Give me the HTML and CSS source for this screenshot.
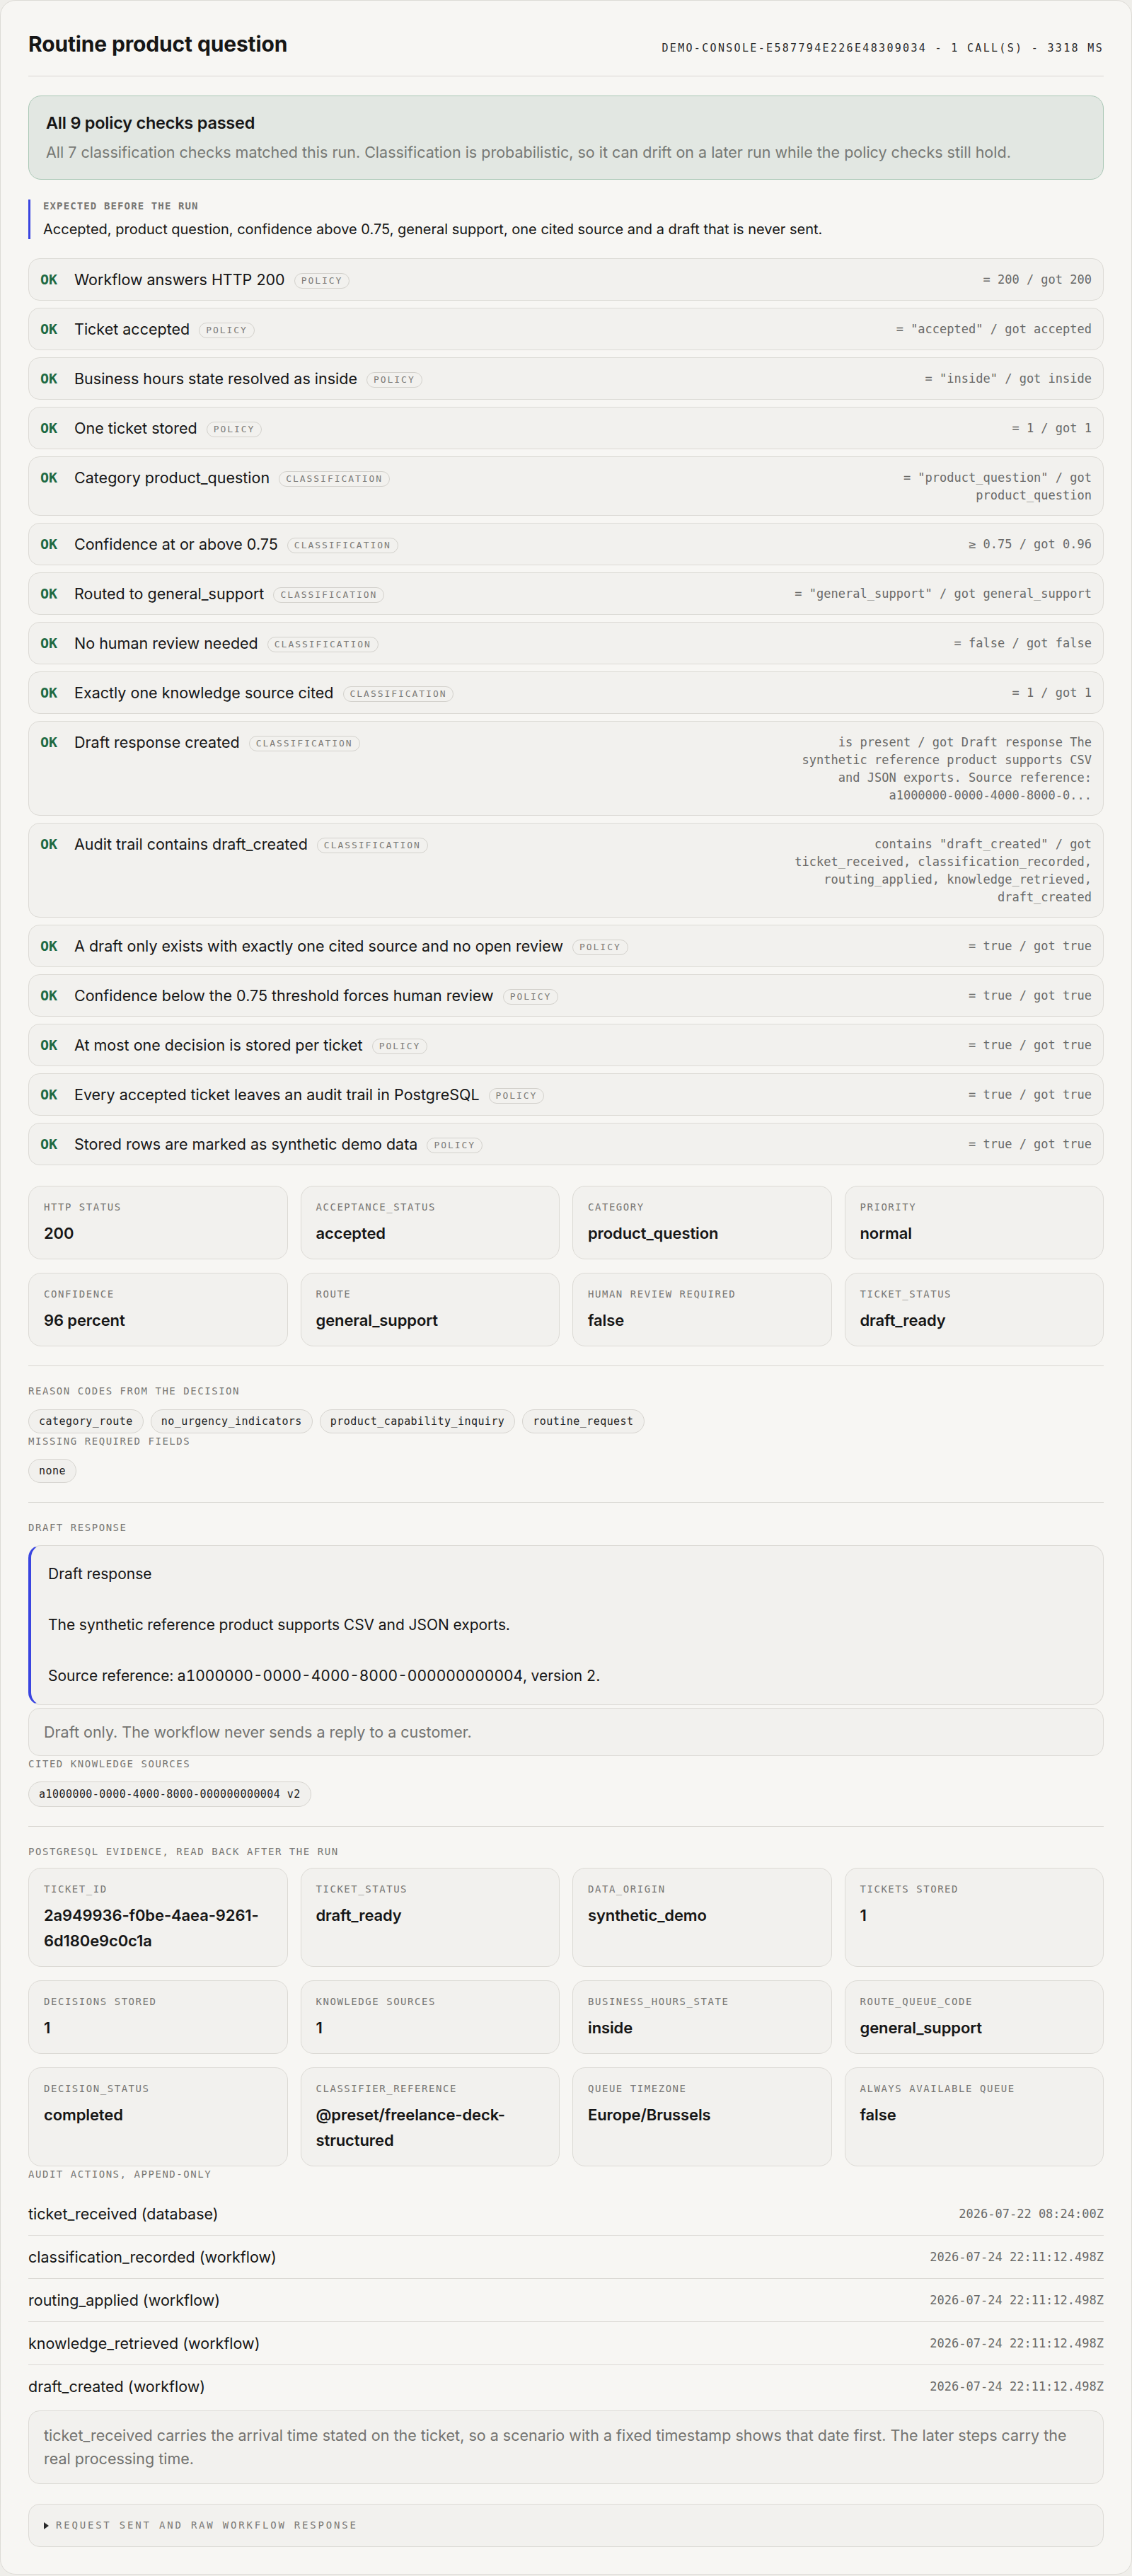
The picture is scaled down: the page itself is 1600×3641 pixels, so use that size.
FILE: index.html
```html
<!DOCTYPE html>
<html lang="en">
<head>
  <meta charset="UTF-8" />
  <meta name="viewport" content="width=device-width, initial-scale=1.0" />
  <title>Routine product question</title>
  <link rel="stylesheet" href="styles.css">
</head>
<body>
  <main class="run">
    <header class="run-head">
      <h1>Routine product question</h1>
      <span class="run-meta">demo-console-e587794e226e48309034 - 1 call(s) - 3318 ms</span>
    </header>

    <section class="verdict">
      <h2>All 9 policy checks passed</h2>
      <p>All 7 classification checks matched this run. Classification is probabilistic, so it can drift on a later run while the policy checks still hold.</p>
    </section>

    <section class="expected">
      <div class="caption strong">Expected before the run</div>
      <p>Accepted, product question, confidence above 0.75, general support, one cited source and a draft that is never sent.</p>
    </section>

    <ul class="checks">
      <li class="check"><span class="ok">OK</span><span class="check-name">Workflow answers HTTP 200 <span class="kind">policy</span></span><span class="check-value">= 200 / got 200</span></li>
      <li class="check"><span class="ok">OK</span><span class="check-name">Ticket accepted <span class="kind">policy</span></span><span class="check-value">= "accepted" / got accepted</span></li>
      <li class="check"><span class="ok">OK</span><span class="check-name">Business hours state resolved as inside <span class="kind">policy</span></span><span class="check-value">= "inside" / got inside</span></li>
      <li class="check"><span class="ok">OK</span><span class="check-name">One ticket stored <span class="kind">policy</span></span><span class="check-value">= 1 / got 1</span></li>
      <li class="check"><span class="ok">OK</span><span class="check-name">Category product_question <span class="kind">classification</span></span><span class="check-value">= "product_question" / got product_question</span></li>
      <li class="check"><span class="ok">OK</span><span class="check-name">Confidence at or above 0.75 <span class="kind">classification</span></span><span class="check-value">&ge; 0.75 / got 0.96</span></li>
      <li class="check"><span class="ok">OK</span><span class="check-name">Routed to general_support <span class="kind">classification</span></span><span class="check-value">= "general_support" / got general_support</span></li>
      <li class="check"><span class="ok">OK</span><span class="check-name">No human review needed <span class="kind">classification</span></span><span class="check-value">= false / got false</span></li>
      <li class="check"><span class="ok">OK</span><span class="check-name">Exactly one knowledge source cited <span class="kind">classification</span></span><span class="check-value">= 1 / got 1</span></li>
      <li class="check"><span class="ok">OK</span><span class="check-name">Draft response created <span class="kind">classification</span></span><span class="check-value">is present / got Draft response The synthetic reference product supports CSV and JSON exports. Source reference: a1000000-0000-4000-8000-0...</span></li>
      <li class="check"><span class="ok">OK</span><span class="check-name">Audit trail contains draft_created <span class="kind">classification</span></span><span class="check-value">contains "draft_created" / got ticket_received, classification_recorded, routing_applied, knowledge_retrieved, draft_created</span></li>
      <li class="check"><span class="ok">OK</span><span class="check-name">A draft only exists with exactly one cited source and no open review <span class="kind">policy</span></span><span class="check-value">= true / got true</span></li>
      <li class="check"><span class="ok">OK</span><span class="check-name">Confidence below the 0.75 threshold forces human review <span class="kind">policy</span></span><span class="check-value">= true / got true</span></li>
      <li class="check"><span class="ok">OK</span><span class="check-name">At most one decision is stored per ticket <span class="kind">policy</span></span><span class="check-value">= true / got true</span></li>
      <li class="check"><span class="ok">OK</span><span class="check-name">Every accepted ticket leaves an audit trail in PostgreSQL <span class="kind">policy</span></span><span class="check-value">= true / got true</span></li>
      <li class="check"><span class="ok">OK</span><span class="check-name">Stored rows are marked as synthetic demo data <span class="kind">policy</span></span><span class="check-value">= true / got true</span></li>
    </ul>

    <div class="facts decision">
      <div class="fact"><div class="caption">HTTP status</div><div class="fact-value">200</div></div>
      <div class="fact"><div class="caption">acceptance_status</div><div class="fact-value">accepted</div></div>
      <div class="fact"><div class="caption">category</div><div class="fact-value">product_question</div></div>
      <div class="fact"><div class="caption">priority</div><div class="fact-value">normal</div></div>
      <div class="fact"><div class="caption">confidence</div><div class="fact-value">96 percent</div></div>
      <div class="fact"><div class="caption">route</div><div class="fact-value">general_support</div></div>
      <div class="fact"><div class="caption">human review required</div><div class="fact-value">false</div></div>
      <div class="fact"><div class="caption">ticket_status</div><div class="fact-value">draft_ready</div></div>
    </div>

    <hr class="rule">

    <section class="codes">
      <div class="caption">Reason codes from the decision</div>
      <div class="chips">
        <span class="chip">category_route</span>
        <span class="chip">no_urgency_indicators</span>
        <span class="chip">product_capability_inquiry</span>
        <span class="chip">routine_request</span>
      </div>
      <div class="caption tight">Missing required fields</div>
      <div class="chips">
        <span class="chip">none</span>
      </div>
    </section>

    <hr class="rule">

    <section class="draft-block">
      <div class="caption">Draft response</div>
      <div class="draft">Draft response

The synthetic reference product supports CSV and JSON exports.

Source reference: a1000000-0000-4000-8000-000000000004, version 2.</div>
      <p class="note">Draft only. The workflow never sends a reply to a customer.</p>
      <div class="caption tight">Cited knowledge sources</div>
      <div class="chips">
        <span class="chip">a1000000-0000-4000-8000-000000000004 v2</span>
      </div>
    </section>

    <hr class="rule">

    <section class="evidence">
      <div class="caption">PostgreSQL evidence, read back after the run</div>
      <div class="facts">
        <div class="fact"><div class="caption">ticket_id</div><div class="fact-value">2a949936-f0be-4aea-9261-6d180e9c0c1a</div></div>
        <div class="fact"><div class="caption">ticket_status</div><div class="fact-value">draft_ready</div></div>
        <div class="fact"><div class="caption">data_origin</div><div class="fact-value">synthetic_demo</div></div>
        <div class="fact"><div class="caption">tickets stored</div><div class="fact-value">1</div></div>
        <div class="fact"><div class="caption">decisions stored</div><div class="fact-value">1</div></div>
        <div class="fact"><div class="caption">knowledge sources</div><div class="fact-value">1</div></div>
        <div class="fact"><div class="caption">business_hours_state</div><div class="fact-value">inside</div></div>
        <div class="fact"><div class="caption">route_queue_code</div><div class="fact-value">general_support</div></div>
        <div class="fact"><div class="caption">decision_status</div><div class="fact-value">completed</div></div>
        <div class="fact"><div class="caption">classifier_reference</div><div class="fact-value">@preset/freelance-deck-structured</div></div>
        <div class="fact"><div class="caption">queue timezone</div><div class="fact-value">Europe/Brussels</div></div>
        <div class="fact"><div class="caption">always available queue</div><div class="fact-value">false</div></div>
      </div>

      <div class="caption tight">Audit actions, append-only</div>
      <ul class="audit">
        <li><span>ticket_received (database)</span><time>2026-07-22 08:24:00Z</time></li>
        <li><span>classification_recorded (workflow)</span><time>2026-07-24 22:11:12.498Z</time></li>
        <li><span>routing_applied (workflow)</span><time>2026-07-24 22:11:12.498Z</time></li>
        <li><span>knowledge_retrieved (workflow)</span><time>2026-07-24 22:11:12.498Z</time></li>
        <li><span>draft_created (workflow)</span><time>2026-07-24 22:11:12.498Z</time></li>
      </ul>
      <p class="note two-line">ticket_received carries the arrival time stated on the ticket, so a scenario with a fixed timestamp shows that date first. The later steps carry the real processing time.</p>
    </section>

    <details class="raw">
      <summary><span class="marker"></span>Request sent and raw workflow response</summary>
    </details>
  </main>
</body>
</html>
```

FILE: styles.css
```css
body {
  margin: 0;
  font-family: Inter, "Noto Sans", sans-serif;
  background-color: #efeeea;
  color: #161616;
}

.run {
  background-color: #f7f6f3;
  border: 1px solid #dddbd6;
  border-radius: 22px;
  padding: 43px 39px 38px;
}

.run-head {
  display: flex;
  justify-content: space-between;
  align-items: baseline;
  padding-bottom: 27px;
  border-bottom: 1px solid #d9d7d2;
}

.run-head h1 {
  margin: 0;
  font-size: 30px;
  line-height: 36px;
  font-weight: 700;
  letter-spacing: -0.005em;
}

.run-meta {
  font-family: "DejaVu Sans Mono", monospace;
  font-size: 15px;
  letter-spacing: 0.155em;
  text-transform: uppercase;
  color: #2a2a2a;
}

.caption {
  font-family: "DejaVu Sans Mono", monospace;
  font-size: 14px;
  line-height: 20px;
  letter-spacing: 0.11em;
  text-transform: uppercase;
  color: #777673;
}

.caption.strong {
  line-height: 18px;
  font-weight: bold;
  letter-spacing: 0.08em;
}

/* verdict */
.verdict {
  margin-top: 27px;
  padding: 23px 24px 24px;
  background-color: #e2e7e2;
  border: 1px solid #a9c7b5;
  border-radius: 18px;
}

.verdict h2 {
  margin: 0 0 12px;
  font-size: 23.5px;
  line-height: 30px;
  font-weight: 600;
  letter-spacing: -0.01em;
}

.verdict p {
  margin: 0;
  font-size: 21.5px;
  line-height: 28px;
  color: #767874;
}

.expected {
  margin-top: 28px;
  padding-left: 18px;
  border-left: 3px solid #3a45e0;
}

.expected p {
  margin: 10px 0 0;
  font-size: 20px;
  line-height: 28px;
}

/* checks */
.checks {
  list-style: none;
  margin: 27px 0 0;
  padding: 0;
  display: flex;
  flex-direction: column;
  gap: 10px;
}

.check {
  display: flex;
  align-items: flex-start;
  gap: 16px;
  padding: 15px 16px;
  background-color: #f2f1ee;
  border: 1px solid #dcdad5;
  border-radius: 16px;
}

.ok {
  width: 32px;
  flex: none;
  font-family: "DejaVu Sans Mono", monospace;
  font-weight: bold;
  font-size: 20px;
  line-height: 28px;
  color: #1e6a43;
}

.check-name {
  flex: 1;
  font-size: 21.5px;
  line-height: 28px;
}

.kind {
  display: inline-block;
  margin-left: 7px;
  padding: 1px 9px;
  border: 1px solid #d3d1cc;
  border-radius: 999px;
  font-family: "DejaVu Sans Mono", monospace;
  font-size: 13px;
  line-height: 18px;
  letter-spacing: 0.15em;
  text-transform: uppercase;
  color: #7c7b78;
  vertical-align: 2px;
}

.check-value {
  max-width: 430px;
  padding-top: 2px;
  text-align: right;
  font-family: "DejaVu Sans Mono", monospace;
  font-size: 17px;
  line-height: 25px;
  color: #6a6a68;
}

/* fact cards */
.facts {
  display: grid;
  grid-template-columns: repeat(4, 1fr);
  gap: 19px 18px;
}

.decision {
  margin-top: 29px;
}

.fact {
  padding: 19px 21px 18px;
  background-color: #f2f1ee;
  border: 1px solid #dcdad5;
  border-radius: 18px;
}

.fact-value {
  margin-top: 9px;
  font-size: 22px;
  line-height: 36px;
  font-weight: 600;
  letter-spacing: -0.005em;
  overflow-wrap: break-word;
}

.rule {
  margin: 27px 0 25px;
  border: none;
  border-top: 1px solid #d9d7d2;
}

/* chips */
.chips {
  display: flex;
  flex-wrap: wrap;
  gap: 10px;
  margin-top: 16px;
}

.chip {
  padding: 6px 14px;
  background-color: #f1f0ed;
  border: 1px solid #d6d4cf;
  border-radius: 999px;
  font-family: "DejaVu Sans Mono", monospace;
  font-size: 15px;
  line-height: 20px;
  letter-spacing: 0.03em;
  color: #1e1e1e;
}

.caption.tight {
  margin-top: 1px;
}

.codes .chips:last-child {
  margin-top: 15px;
}

/* draft */
.draft {
  margin-top: 15px;
  padding: 22px 24px;
  white-space: pre-wrap;
  font-size: 21px;
  line-height: 36px;
  font-variant-numeric: tabular-nums;
  background-color: #f2f1ee;
  border: 1px solid #dcdad5;
  border-left: 4px solid #3a45e0;
  border-radius: 18px;
}

.note {
  margin: 4px 0 0;
  padding: 19px 21px;
  font-size: 21.5px;
  line-height: 28px;
  color: #737370;
  background-color: #f2f1ee;
  border: 1px solid #dcdad5;
  border-radius: 16px;
}

.note.two-line {
  padding: 18px 21px;
  line-height: 33px;
}

.draft-block .chips {
  margin-top: 15px;
}

.draft-block .chip {
  line-height: 22px;
}

.evidence .facts {
  margin-top: 13px;
}

/* audit */
.audit {
  list-style: none;
  margin: 16px 0 0;
  padding: 0;
}

.audit li {
  display: flex;
  justify-content: space-between;
  align-items: center;
  height: 30px;
  padding: 15px 0;
  font-size: 21.5px;
  line-height: 30px;
  border-bottom: 1px solid #dcdad5;
}

.audit li:last-child {
  border-bottom: none;
}

.audit time {
  font-family: "DejaVu Sans Mono", monospace;
  font-size: 17px;
  line-height: 30px;
  color: #6a6a68;
}

.raw {
  margin-top: 28px;
  padding: 19px 21px;
  background-color: #f2f1ee;
  border: 1px solid #dcdad5;
  border-radius: 16px;
}

.raw summary {
  display: flex;
  align-items: center;
  list-style: none;
  font-family: "DejaVu Sans Mono", monospace;
  font-size: 14px;
  line-height: 21px;
  letter-spacing: 0.2em;
  text-transform: uppercase;
  color: #7a7976;
  cursor: pointer;
}

.raw summary::-webkit-details-marker {
  display: none;
}

.marker {
  width: 0;
  height: 0;
  margin-right: 10px;
  border-left: 7px solid #2a2a2a;
  border-top: 5px solid transparent;
  border-bottom: 5px solid transparent;
}
```
